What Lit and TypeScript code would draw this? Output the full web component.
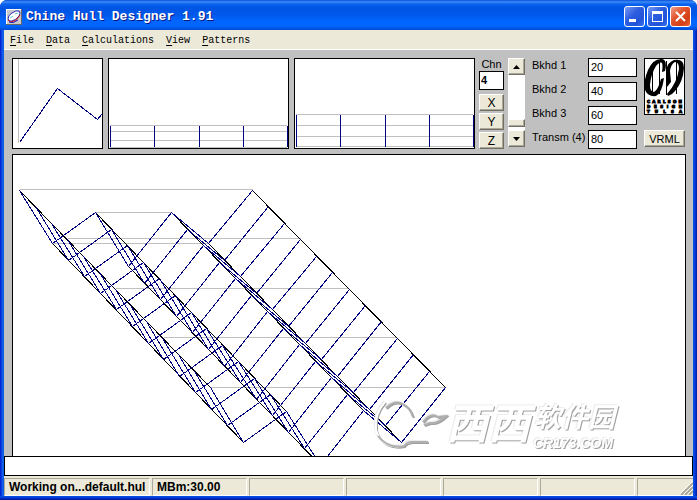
import { LitElement, html, css, svg } from "lit";
import { customElement, state } from "lit/decorators.js";

type Point = [number, number];

/* Start and end point of each hull curve, in canvas units. */
const CURVES: { from: Point; to: Point }[] = [
  { from: [6, 35], to: [197, 232] },
  { from: [39, 88], to: [230, 287] },
  { from: [82, 57], to: [273, 256] },
  { from: [115, 111], to: [307, 310] },
  { from: [158, 57], to: [350, 255] },
  { from: [195, 88], to: [388, 287] },
  { from: [239, 35], to: [432, 232] },
];
const STATIONS = 12;

const WATERLINES: [number, number, number][] = [
  [6, 239, 34],
  [82, 158, 57],
  [54, 287, 83],
  [39, 195, 88],
  [102, 334, 133],
  [150, 382, 182],
  [197, 432, 232],
];

const at = (c: { from: Point; to: Point }, i: number): Point => [
  Math.round(c.from[0] + ((c.to[0] - c.from[0]) * i) / STATIONS),
  Math.round(c.from[1] + ((c.to[1] - c.from[1]) * i) / STATIONS),
];

@customElement("hull-view")
export class HullView extends LitElement {
  static styles = css`
    :host { display: block; width: 100%; height: 100%; }
    svg { display: block; width: 100%; height: 100%; shape-rendering: crispEdges; }
    .water { stroke: #c0c0c0; }
    .curve { stroke: #000; }
    .station { stroke: #000080; fill: none; }
  `;
  render() {
    const stations = Array.from({ length: STATIONS + 1 }, (_, i) =>
      CURVES.map((c) => at(c, i).join(",")).join(" ")
    );
    return html`<svg role="img" aria-label="Hull">
      <g transform="translate(0.5 0.5)">
        ${WATERLINES.map(([a, b, y]) => svg`<line class="water" x1=${a} x2=${b} y1=${y} y2=${y} />`)}
        ${CURVES.map((c) => svg`<line class="curve" x1=${c.from[0]} y1=${c.from[1]} x2=${c.to[0]} y2=${c.to[1]} />`)}
        ${stations.map((p) => svg`<polyline class="station" points=${p} />`)}
      </g>
    </svg>`;
  }
}

@customElement("app-root")
export class AppRoot extends LitElement {
  @state() private bulkheads = [
    { label: "Bkhd 1", value: "20" },
    { label: "Bkhd 2", value: "40" },
    { label: "Bkhd 3", value: "60" },
    { label: "Transm (4)", value: "80" },
  ];

  static styles = css`
    * { box-sizing: border-box; }
    :host {
      display: block;
      height: 100vh;
      background: #fff;
      color: #000;
      font: 11px/14px "Liberation Sans", Arial, sans-serif;
    }
    button, input { font: inherit; color: inherit; margin: 0; padding: 0; border-radius: 0; }
    .window {
      display: flex;
      flex-direction: column;
      height: 100%;
      border-radius: 7px 7px 0 0;
      overflow: hidden;
      background: linear-gradient(90deg, #0019cf 0, #0831d9 1px, #166aee 3px, #0855dd 4px, #0855dd calc(100% - 4px), #0048f0 calc(100% - 3px), #001ea0 100%);
    }
    .title {
      display: flex;
      flex: none;
      align-items: center;
      height: 30px;
      padding: 3px 6px 0;
      gap: 4px;
      background: linear-gradient(#0a50d8 0, #3c8cf8 2px, #0a62ee 4px, #0054e3 8px, #0058ea 15px, #0066ff 21px, #0066ff 26px, #004ad0 30px);
    }
    .title h1 {
      flex: 1;
      margin: 0;
      color: #fff;
      font: bold 13px/20px "Liberation Mono", monospace;
      text-shadow: 1px 1px #0a1883;
      white-space: nowrap;
    }
    .caption { display: flex; gap: 2px; }
    .caption button {
      width: 21px;
      height: 21px;
      border: 1px solid #fff;
      border-radius: 3px;
      background: linear-gradient(135deg, #7a9cf4, #2e5fe0 40%, #2153d8 75%, #3c74f0);
    }
    .caption .close { background: linear-gradient(135deg, #f0a088, #e2532e 40%, #d23f16 75%, #e86838); }
    .caption svg { display: block; }
    .body { display: flex; flex: 1; flex-direction: column; min-height: 0; margin: 0 4px; background: #c0c0c0; }
    .menu {
      display: flex;
      flex: none;
      height: 20px;
      background: #ece9d8;
      border-bottom: 1px solid #fff;
    }
    .menu button {
      padding: 2px 6px 0;
      border: 0;
      background: none;
      font: 10px/18px "Liberation Mono", monospace;
    }
    .menu u { text-underline-offset: 2px; }
    .workspace { display: flex; flex: 1; flex-direction: column; gap: 5px; min-height: 0; padding: 8px 7px 0 8px; }
    .toolbar { display: flex; flex: none; justify-content: space-between; gap: 7px; padding-right: 1px; }
    .views, .drive, .stack { display: flex; }
    .views { flex: 1; gap: 5px; }
    .preview { height: 91px; border: 1px solid #000; background: #fff; }
    .preview svg { display: block; width: 100%; height: 100%; shape-rendering: crispEdges; }
    .section { width: 91px; }
    .wide { flex: 1; }
    .grey { stroke: #c0c0c0; fill: none; }
    .navy { stroke: #000080; fill: none; }
    .left { display: flex; flex: 1; gap: 4px; }
    .stack { flex-direction: column; width: 25px; gap: 2px; }
    .stack label { height: 13px; margin-bottom: -2px; text-align: center; line-height: 13px; }
    .box { width: 100%; height: 19px; border: 1px solid #000; background: #fff; outline: 0; }
    .chine { padding: 0 1px 2px; margin-bottom: 2px; font-weight: bold; }
    .face {
      width: 100%;
      height: 17px;
      border: 1px solid;
      border-color: #fff #716f64 #716f64 #fff;
      background: #ece9d8;
      box-shadow: inset -1px -1px #aca899;
      line-height: 14px;
    }
    .axis { font-size: 12px; }
    .drive { flex-direction: column; width: 17px; height: 89px; background: #fff; }
    .drive .face { flex: none; }
    .drive svg { display: block; margin: 0 auto; }
    .slide {
      flex: 1;
      width: 17px;
      min-height: 0;
      writing-mode: vertical-lr;
      appearance: none;
      background: #fff;
    }
    .slide::-webkit-slider-thumb {
      appearance: none;
      width: 17px;
      height: 8px;
      border: 1px solid;
      border-color: #fff #716f64 #716f64 #fff;
      background: #ece9d8;
      box-shadow: inset -1px -1px #aca899;
    }
    .fields { display: grid; grid-template-columns: 56px 49px; gap: 5px 0; align-items: start; }
    .fields .box { padding: 0 2px 2px; }
    .side { display: flex; flex-direction: column; justify-content: space-between; width: 41px; height: 89px; }
    .logo { height: 57px; border: 1px solid #000; background: #fff; }
    .logo svg { display: block; }
    .word {
      display: flex;
      justify-content: space-between;
      padding: 0 2px;
      font: bold 4px/5px "DejaVu Sans", sans-serif;
      -webkit-text-stroke: 1px #000;
    }
    .canvas { position: relative; flex: 1; min-height: 0; border: 1px solid #000; border-bottom: 0; background: #fff; overflow: hidden; }
    .mark { position: absolute; right: 55px; bottom: 4px; filter: drop-shadow(1px 1px 0 #a0a0a0) drop-shadow(-1px -1px 0 #ececec); }
    .mark text { fill: #fff; font-family: "Liberation Sans", "Noto Sans CJK SC", sans-serif; font-weight: bold; font-style: italic; }
    .west { font-size: 42px; }
    .park { font-size: 27px; }
    .site { font-size: 14px; }
    .swoosh { fill: none; stroke: #fff; stroke-width: 2; }
    .dark { stroke: #b0b0b0; }
    .message { flex: none; height: 20px; border: 1px solid #000; background: #fff; }
    .status { display: flex; flex: none; gap: 2px; height: 20px; padding-top: 2px; background: #ece9d8; }
    .cell {
      width: 95px;
      padding-left: 4px;
      border: 1px solid;
      border-color: #aca899 #fff #fff #aca899;
      font: bold 12px/16px "Liberation Sans", Arial, sans-serif;
      white-space: nowrap;
    }
    .cell:first-child { width: 146px; }
    .cell:last-child { display: flex; flex: 1; align-items: flex-end; justify-content: flex-end; border-right: 0; }
    .edge { flex: none; height: 4px; background: linear-gradient(#0a50e8, #0038d8 50%, #00108c); }
  `;

  private arrow(points: string) {
    return html`<svg width="7" height="4" aria-hidden="true"><polygon points=${points} /></svg>`;
  }

  private plan(rows: number[], top: number) {
    return html`<svg viewBox="0 0 179 89" preserveAspectRatio="none" aria-hidden="true">
      ${rows.map((y) => svg`<line class="grey" x1="1" x2="178" y1=${y + 0.5} y2=${y + 0.5} />`)}
      ${[1, 45, 90, 134, 178].map((x) => svg`<line class="navy" x1=${x + 0.5} x2=${x + 0.5} y1=${top} y2="88" />`)}
    </svg>`;
  }

  private item(name: string) {
    return html`<button><u>${name[0]}</u>${name.slice(1)}</button>`;
  }

  render() {
    return html`
      <div class="window">
        <header class="title">
          <svg width="16" height="16" viewBox="0 0 16 16" aria-hidden="true">
            <rect width="16" height="16" fill="#c8c8c8" />
            <path d="M0 .5H16M.5 0V16" stroke="#fff" />
            <path d="M0 15.5H16M15.5 0V16" stroke="#666" />
            <path d="M2 10Q2 6 6 4Q10 1 13 2Q15 4 13 7Q10 11 6 12Q3 13 2 10Z" fill="#fff" stroke="#2828b8" />
            <path d="M4 9L7 7M9 5L12 4" fill="none" stroke="#60d0d0" />
            <path d="M2 11Q4 14 8 12Q12 10 14 6" fill="none" stroke="#e01010" />
            <path d="M3 13Q7 15 12 11" fill="none" stroke="#1010c0" />
          </svg>
          <h1>Chine Hull Designer 1.91</h1>
          <div class="caption">
            <button aria-label="Minimize"><svg width="19" height="19"><rect x="4" y="12" width="7" height="3" fill="#fff" /></svg></button>
            <button aria-label="Maximize"><svg width="19" height="19"><path d="M4 4H15V15H4ZM5 7V14H14V7Z" fill="#fff" fill-rule="evenodd" /></svg></button>
            <button class="close" aria-label="Close"><svg width="19" height="19"><path d="M5 5L14 14M14 5L5 14" stroke="#fff" stroke-width="2" /></svg></button>
          </div>
        </header>
        <div class="body">
          <nav class="menu">${["File", "Data", "Calculations", "View", "Patterns"].map((n) => this.item(n))}</nav>
          <main class="workspace">
            <div class="toolbar">
              <div class="left">
                <div class="views">
                  <div class="preview section">
                    <svg viewBox="0 0 89 89" aria-hidden="true">
                      <path class="grey" d="M5.5 0V84" />
                      <path class="navy" d="M6.5 83.5L44.5 29.5L84.5 60.5L89.5 54.5" />
                    </svg>
                  </div>
                  <div class="preview wide">${this.plan([66, 72, 81, 88], 67)}</div>
                  <div class="preview wide">${this.plan([55, 66, 77, 87], 56)}</div>
                </div>
                <div class="stack">
                  <label for="chine">Chn</label>
                  <input class="box chine" id="chine" value="4" />
                  ${["X", "Y", "Z"].map((a) => html`<button class="face axis">${a}</button>`)}
                </div>
                <div class="drive">
                  <button class="face" aria-label="Up">${this.arrow("0,4 3.5,0 7,4")}</button>
                  <input class="slide" type="range" min="0" max="100" value="94" aria-label="Position" />
                  <button class="face" aria-label="Down">${this.arrow("0,0 3.5,4 7,0")}</button>
                </div>
              </div>
              <div class="fields">
                ${this.bulkheads.map(
                  (b, i) => html`<label for="b${i}">${b.label}</label><input class="box" id="b${i}" .value=${b.value} />`
                )}
              </div>
              <div class="side">
                <div class="logo">
                  <svg width="39" height="40" viewBox="1 1 39 40" aria-hidden="true">
                    <path d="M8.5 10V36M15.5 3V36M32.500 4V36M22.500 3V37" stroke="#000" />
                    <path d="M18 14L21 13Q24 1 17 1Q9 1 4 12Q-1 24 1 32Q4 39 12 38Q18 35 20 20L17 21Q14 32 10 34Q6 34 6 27Q7 16 12 8Q16 3 18 5Q19 8 18 14Z" />
                    <path d="M22 12Q24 4 30 2Q40 0 40 10Q39 24 31 33Q28 37 24 38L23 36Q33 25 35 11Q35 4 31 4Q27 6 26 13L27 24L23 29Z" />
                  </svg>
                  ${["CARLSON", "DESIGN", "TULSA"].map(
                    (w) => html`<div class="word">${[...w].map((c) => html`<span>${c}</span>`)}</div>`
                  )}
                </div>
                <button class="face">VRML</button>
              </div>
            </div>
            <div class="canvas">
              <hull-view></hull-view>
              <svg class="mark" width="260" height="56">
                <path class="swoosh" d="M15 6Q4 18 6 34Q12 53 32 50Q37 46 42 46H58" />
                <path class="swoosh dark" d="M16 12Q26 2 36 10Q41 14 43 21M8 40Q18 53 34 50Q37 46 42 46H58" />
                <path class="swoosh dark" d="M53 26Q61 16 68 21L76 20Q68 28 60 27L54 29" />
                <text class="west" x="76" y="43">西西</text>
                <text class="park" x="164" y="31">软件园</text>
                <text class="site" x="163" y="52">CR173.COM</text>
              </svg>
            </div>
          </main>
          <div class="message"></div>
          <footer class="status">
            <div class="cell">Working on...default.hul</div>
            <div class="cell">MBm:30.00</div>
            <div class="cell"></div>
            <div class="cell"></div>
            <div class="cell"></div>
            <div class="cell"></div>
            <div class="cell">
              <svg width="13" height="13" aria-hidden="true">
                <path d="M1 13L13 1M5 13L13 5M9 13L13 9" stroke="#aca899" stroke-width="2" />
                <path d="M0 12L12 0M4 12L13 3M8 12L13 7" stroke="#fff" />
              </svg>
            </div>
          </footer>
        </div>
        <div class="edge"></div>
      </div>
    `;
  }
}
